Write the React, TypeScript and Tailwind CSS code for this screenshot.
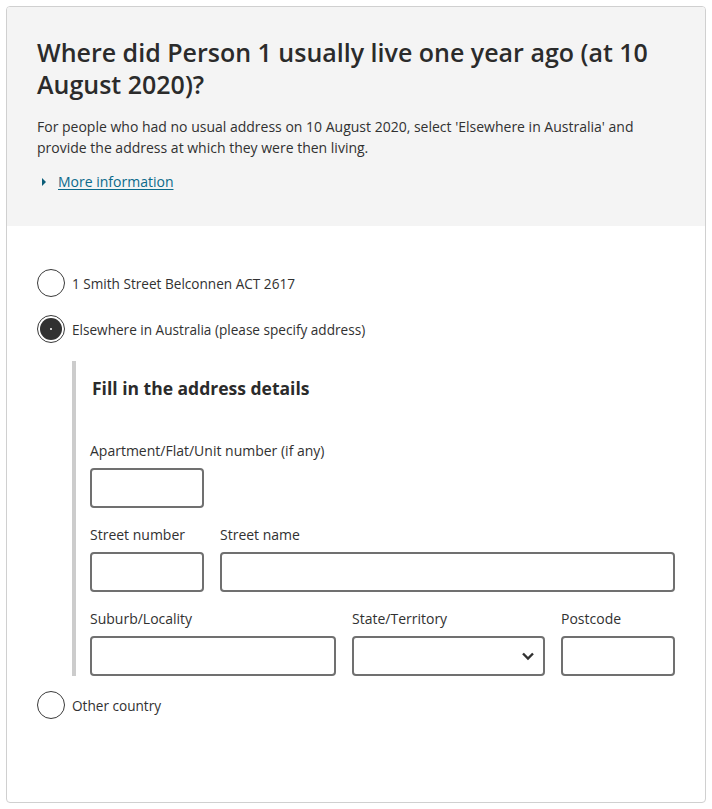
import React from "react";

const font = { fontFamily: '"Open Sans", "Noto Sans", sans-serif' };

const Radio = ({ label, checked }: { label: string; checked?: boolean }) => (
  <label className="flex items-center gap-[7px] cursor-pointer">
    <span className="flex h-[28px] w-[28px] shrink-0 items-center justify-center rounded-full border border-[#3a3a3a] bg-white">
      {checked && (
        <span className="flex h-[22px] w-[22px] items-center justify-center rounded-full bg-[#313131]">
          <span className="h-[2px] w-[2px] rounded-full bg-white" />
        </span>
      )}
    </span>
    <span className="text-[13.6px] leading-[21px] text-[#313131]">{label}</span>
  </label>
);

const Field = ({
  label,
  className,
  select,
}: {
  label: string;
  className?: string;
  select?: boolean;
}) => (
  <div className={className}>
    <div className="text-[14px] leading-[21px] text-[#313131]">{label}</div>
    <div className="relative mt-[7px] h-[40px] w-full rounded-[4px] border-2 border-[#707070] bg-white">
      {select && (
        <svg
          className="absolute right-[8px] top-[12px]"
          width="14"
          height="12"
          viewBox="0 0 14 12"
          fill="none"
        >
          <path d="M2 3.5 L7 8.5 L12 3.5" stroke="#313131" strokeWidth="2.4" />
        </svg>
      )}
    </div>
  </div>
);

export default function App() {
  return (
    <div className="bg-white p-[6px]" style={font}>
      <div className="overflow-hidden rounded-[4px] border border-[#d0d0d0]">
        {/* Question header */}
        <div className="bg-[#f4f4f4] px-[30px] pt-[29px] pb-[34px]">
          <h1 className="text-[25px] font-semibold leading-[32px] text-[#2b2b2b]">
            Where did Person 1 usually live one year ago (at 10 August 2020)?
          </h1>
          <p className="mt-[16px] text-[14px] leading-[21px] text-[#313131]">
            For people who had no usual address on 10 August 2020, select
            'Elsewhere in Australia' and provide the address at which they were
            then living.
          </p>
          <div className="mt-[13px] flex items-center text-[14px] leading-[21px]">
            <span className="ml-[5px] mr-[12px] h-0 w-0 border-y-[4px] border-l-[4px] border-y-transparent border-l-[#0b5d78]" />
            <a className="text-[#0b6a8b] underline underline-offset-2">
              More information
            </a>
          </div>
        </div>

        {/* Options */}
        <div className="px-[30px] pt-[43px] pb-[83px]">
          <div className="flex flex-col gap-[18px]">
            <Radio label="1 Smith Street Belconnen ACT 2617" />
            <Radio label="Elsewhere in Australia (please specify address)" checked />
          </div>

          <div className="ml-[35px] mt-[18px] border-l-4 border-[#cccccc] pl-[14px] pt-[14px]">
            <h2 className="pl-[2px] text-[17.5px] font-bold leading-[27px] text-[#2b2b2b]">
              Fill in the address details
            </h2>
            <div className="mt-[38px] flex flex-col gap-[16px]">
              <Field label="Apartment/Flat/Unit number (if any)" className="w-[114px] whitespace-nowrap" />
              <div className="flex gap-[16px]">
                <Field label="Street number" className="w-[114px]" />
                <Field label="Street name" className="flex-1" />
              </div>
              <div className="flex gap-[16px]">
                <Field label="Suburb/Locality" className="flex-1" />
                <Field label="State/Territory" className="w-[193px]" select />
                <Field label="Postcode" className="w-[114px]" />
              </div>
            </div>
          </div>

          <div className="mt-[15px]">
            <Radio label="Other country" />
          </div>
        </div>
      </div>
    </div>
  );
}
